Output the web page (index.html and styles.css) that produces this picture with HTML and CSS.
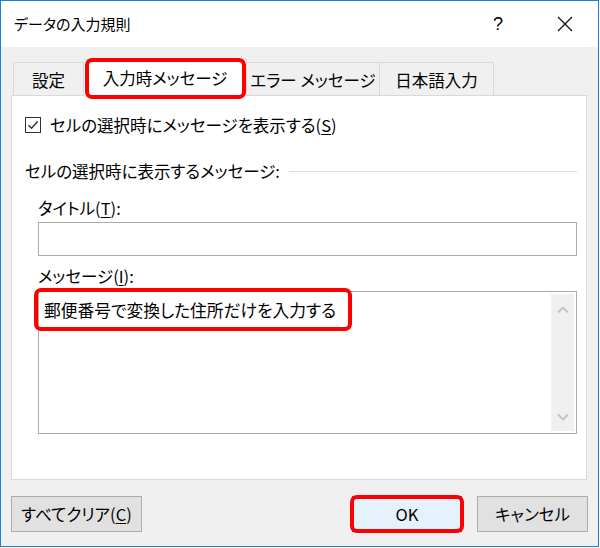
FILE: index.html
```html
<!DOCTYPE html>
<html lang="ja">
<head>
    <meta charset="UTF-8">
    <meta name="viewport" content="width=device-width, initial-scale=1.0">
    <title>データの入力規則</title>

    <link rel="stylesheet" href="styles.css">
</head>
<body>

<!-- Dialog window -->
<div class="dialog">
    <div class="titlebar">
        <span class="title">データの入力規則</span>
        <span class="help">?</span>
        <span class="close-icon">
            <svg width="16" height="16" viewBox="0 0 16 16">
                <path d="M1 1 L15 15 M15 1 L1 15" stroke="#111" stroke-width="1.3" fill="none"/>
            </svg>
        </span>
    </div>

    <div class="dialog-body">
        <!-- Tabs -->
        <div class="tabs">
            <div class="tab tab-settings">設定</div>
            <div class="tab tab-active mark">入力時メッセージ</div>
            <div class="tab tab-error">エラー メッセージ</div>
            <div class="tab tab-ime">日本語入力</div>
        </div>

        <div class="panel">
            <div class="check-row">
                <span class="checkbox">
                    <svg width="14" height="14" viewBox="0 0 14 14">
                        <path d="M2.5 7.2 L5.6 10.2 L11.6 3.4" stroke="#333" stroke-width="1.5" fill="none"/>
                    </svg>
                </span>
                <span>セルの選択時にメッセージを表示する(<u>S</u>)</span>
            </div>

            <div class="group-head">
                <span>セルの選択時に表示するメッセージ:</span>
                <span class="group-line"></span>
            </div>

            <div class="field-label">タイトル(<u>T</u>):</div>
            <div class="text-input"></div>

            <div class="field-label field-label-msg">メッセージ(<u>I</u>):</div>
            <div class="text-area">
                <div class="text-area-content">
                    <span class="mark msg-text">郵便番号で変換した住所だけを入力する</span>
                </div>
                <div class="scrollbar">
                    <svg width="12" height="8" viewBox="0 0 12 8">
                        <path d="M1 6.5 L6 1.5 L11 6.5" stroke="#c2c2c2" stroke-width="1.8" fill="none"/>
                    </svg>
                    <svg width="12" height="8" viewBox="0 0 12 8">
                        <path d="M1 1.5 L6 6.5 L11 1.5" stroke="#c2c2c2" stroke-width="1.8" fill="none"/>
                    </svg>
                </div>
            </div>
        </div>

        <!-- Buttons -->
        <div class="buttons">
            <button class="btn btn-clear">すべてクリア(<u>C</u>)</button>
            <div class="btn-spacer"></div>
            <button class="btn btn-ok mark">OK</button>
            <button class="btn btn-cancel">キャンセル</button>
        </div>
    </div>
</div>

</body>
</html>
```

FILE: styles.css
```css
html, body {
    margin: 0;
    padding: 0;
    background: #fff;
}

body {
    font-family: "Noto Sans CJK JP", "Noto Sans", sans-serif;
    font-size: 16.5px;
    font-feature-settings: "palt";
    color: #000;
}

u {
    text-decoration-thickness: 1px;
    text-underline-offset: 2px;
}

/* Window */
.dialog {
    width: 599px;
    height: 547px;
    box-sizing: border-box;
    border: 1px solid #1a7fd5;
    display: flex;
    flex-direction: column;
    background: #f0f0f0;
}

.titlebar {
    height: 46px;
    flex: none;
    background: #fff;
    display: flex;
    align-items: center;
    padding-left: 13px;
}

.title {
    flex: 1;
    font-size: 15px;
    line-height: 20px;
}

.help {
    width: 12px;
    margin-right: 52px;
    line-height: 20px;
    font-family: "Liberation Sans", sans-serif;
    font-size: 18px;
}

.close-icon {
    width: 16px;
    height: 16px;
    margin-right: 25px;
    display: flex;
}

.dialog-body {
    flex: 1;
    padding: 12px 10px 0 10px;
}

/* Tabs */
.tabs {
    display: flex;
    align-items: flex-end;
    margin-left: 2px;
    height: 36px;
    position: relative;
    z-index: 1;
}

.tab {
    height: 33px;
    box-sizing: border-box;
    border: 1px solid #d9d9d9;
    border-bottom: none;
    border-left: none;
    background: #f0f0f0;
    display: flex;
    align-items: center;
    justify-content: center;
    line-height: 20px;
    padding-top: 1px;
}

.tab-settings {
    width: 71px;
    border-left: 1px solid #d9d9d9;
}

.tab-active {
    width: 163px;
    height: 37px;
    margin-bottom: -1px;
    background: #fff;
    padding-bottom: 2px;
}

.tab-error {
    width: 133px;
}

.tab-ime {
    width: 114px;
}

/* Red annotation boxes */
.mark {
    position: relative;
}

.mark::after {
    content: "";
    position: absolute;
    border: 4px solid #f00;
    border-radius: 7px;
    pointer-events: none;
}

.tab-active::after {
    top: -2px;
    left: 1px;
    right: 0;
    bottom: -3px;
}

.msg-text::after {
    top: -12px;
    left: -10px;
    right: -16px;
    bottom: -11px;
}

.btn-ok::after {
    top: -3px;
    left: -4px;
    right: -4px;
    bottom: -3px;
}

/* Panel */
.panel {
    width: 576px;
    height: 385px;
    box-sizing: border-box;
    border: 1px solid #d9d9d9;
    background: #fff;
    padding: 19px 9px 0 13px;
}

.check-row {
    display: flex;
    align-items: center;
    height: 20px;
    line-height: 20px;
}

.checkbox {
    width: 16px;
    height: 16px;
    box-sizing: border-box;
    border: 1px solid #333;
    display: flex;
    align-items: center;
    justify-content: center;
    margin-right: 9px;
}

.group-head {
    display: flex;
    align-items: center;
    height: 20px;
    line-height: 20px;
    margin-top: 26px;
}

.group-line {
    flex: 1;
    height: 0;
    border-top: 1px solid #dcdcdc;
    margin-left: 9px;
}

.field-label {
    margin: 17px 0 0 13px;
    height: 20px;
    line-height: 20px;
}

.field-label-msg {
    margin-top: 10px;
}

.text-input {
    margin: 4px 0 0 13px;
    height: 34px;
    box-sizing: border-box;
    border: 1px solid #ababab;
    background: #fff;
}

.text-area {
    margin: 5px 0 0 13px;
    height: 143px;
    box-sizing: border-box;
    border: 1px solid #ababab;
    background: #fff;
    display: flex;
    padding: 2px;
}

.text-area-content {
    flex: 1;
    padding: 6px 0 0 3px;
    line-height: 20px;
    font-size: 16.75px;
}

.msg-text {
    display: inline-block;
}

.scrollbar {
    width: 23px;
    background: #f0f0f0;
    display: flex;
    flex-direction: column;
    justify-content: space-between;
    align-items: center;
    padding: 12px 0 10px;
    box-sizing: border-box;
}

/* Buttons */
.buttons {
    display: flex;
    margin-top: 16px;
    height: 36px;
}

.btn {
    font-family: inherit;
    font-size: 16.5px;
    font-feature-settings: "palt";
    color: #000;
    height: 36px;
    box-sizing: border-box;
    border: 1px solid #adadad;
    background: #e1e1e1;
    padding: 0;
    line-height: 20px;
}

.btn-clear {
    width: 131px;
}

.btn-spacer {
    flex: 1;
}

.btn-ok {
    width: 110px;
    background: #e5f1fb;
    border: 2px solid #0078d7;
}

.btn-cancel {
    width: 111px;
    margin-left: 15px;
}
```
